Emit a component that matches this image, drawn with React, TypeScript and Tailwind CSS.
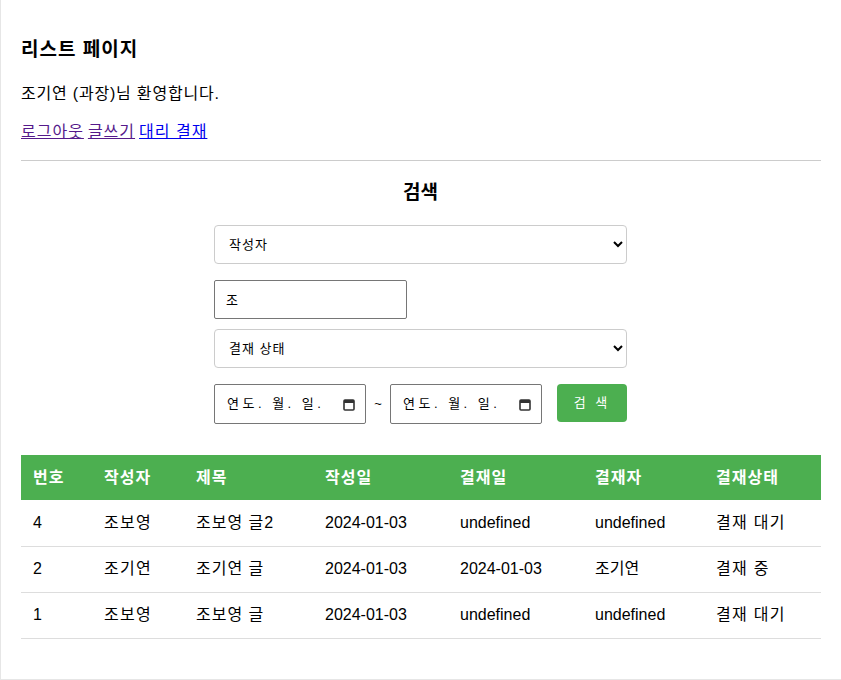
import React from "react";

type Row = {
    no: number;
    writer: string;
    title: string;
    created: string;
    approvedAt: string;
    approver: string;
    status: string;
};

const rows: Row[] = [
    { no: 4, writer: "조보영", title: "조보영 글2", created: "2024-01-03", approvedAt: "undefined", approver: "undefined", status: "결재 대기" },
    { no: 2, writer: "조기연", title: "조기연 글", created: "2024-01-03", approvedAt: "2024-01-03", approver: "조기연", status: "결재 중" },
    { no: 1, writer: "조보영", title: "조보영 글", created: "2024-01-03", approvedAt: "undefined", approver: "undefined", status: "결재 대기" },
];

const font = { fontFamily: '"Liberation Sans", Arial, "Noto Sans CJK KR", sans-serif' };

function DateBox() {
    return (
        <div className="w-[152px] h-[40px] border border-[#767676] rounded-[2px] flex items-center pl-[12px] pr-[10px] text-[13px] text-black bg-white">
            <span className="tracking-[3.5px]">연도. 월. 일.</span>
            <svg className="ml-auto" width="12" height="13" viewBox="0 0 12 13">
                <rect x="1" y="2" width="10" height="10" rx="1" fill="none" stroke="#333" strokeWidth="1.6" />
                <rect x="1" y="2" width="10" height="3" fill="#333" />
            </svg>
        </div>
    );
}

export default function App() {
    return (
        <div className="w-[841px] h-[680px] bg-white border-l border-b border-[#e6e6e6] pl-[20px] pr-[20px] text-black" style={font}>
            <h3 className="pt-[39px] text-[19px] leading-[22px] font-bold tracking-[1px]">리스트 페이지</h3>
            <p className="mt-[24px] text-[16px] leading-[18px] tracking-[0.8px]">조기연 (과장)님 환영합니다.</p>
            <div className="mt-[20px] text-[16px] leading-[18px] flex gap-[4px] tracking-[1px]">
                <a href="#" className="underline text-[#551a8b]">로그아웃</a>
                <a href="#" className="underline text-[#551a8b]">글쓰기</a>
                <a href="#" className="underline text-[#0000ee]">대리 결재</a>
            </div>
            <hr className="mt-[19px] border-t border-[#cccccc]" />

            <div className="w-[413px] ml-[193px]">
                <h3 className="mt-[21px] text-center text-[19px] leading-[22px] font-bold">검색</h3>
                <select className="mt-[21px] w-full h-[39px] border border-[#cccccc] rounded-[4px] px-[10px] text-[13px] bg-white tracking-[1px]">
                    <option>작성자</option>
                </select>
                <input
                    className="mt-[16px] block w-[193px] h-[39px] border border-[#767676] rounded-[2px] px-[11px] text-[13px]"
                    defaultValue="조"
                />
                <select className="mt-[10px] w-full h-[39px] border border-[#cccccc] rounded-[4px] px-[10px] text-[13px] bg-white tracking-[1px]">
                    <option>결재 상태</option>
                </select>
                <div className="mt-[16px] flex items-start">
                    <DateBox />
                    <span className="w-[24px] h-[40px] flex items-center justify-center text-[13px]">~</span>
                    <DateBox />
                    <button className="ml-[15px] w-[70px] h-[38px] bg-[#4caf50] text-white text-[13px] rounded-[4px] tracking-[3px]">검 색</button>
                </div>
            </div>

            <table className="mt-[31px] w-[800px] border-collapse text-[16px] text-left">
                <thead>
                    <tr className="bg-[#4caf50] text-white h-[45px] tracking-[1px]">
                        <th className="w-[71px] px-[12px] font-bold">번호</th>
                        <th className="w-[92px] px-[12px] font-bold">작성자</th>
                        <th className="w-[129px] px-[12px] font-bold">제목</th>
                        <th className="w-[135px] px-[12px] font-bold">작성일</th>
                        <th className="w-[135px] px-[12px] font-bold">결재일</th>
                        <th className="w-[121px] px-[12px] font-bold">결재자</th>
                        <th className="w-[117px] px-[12px] font-bold">결재상태</th>
                    </tr>
                </thead>
                <tbody>
                    {rows.map((r) => (
                        <tr key={r.no} className="h-[46px] border-b border-[#dddddd]">
                            <td className="px-[12px]">{r.no}</td>
                            <td className="px-[12px] tracking-[1.3px]">{r.writer}</td>
                            <td className="px-[12px] tracking-[1px]">{r.title}</td>
                            <td className="px-[12px]">{r.created}</td>
                            <td className="px-[12px]">{r.approvedAt}</td>
                            <td className="px-[12px]">{r.approver}</td>
                            <td className="px-[12px] tracking-[1.3px]">{r.status}</td>
                        </tr>
                    ))}
                </tbody>
            </table>
        </div>
    );
}
